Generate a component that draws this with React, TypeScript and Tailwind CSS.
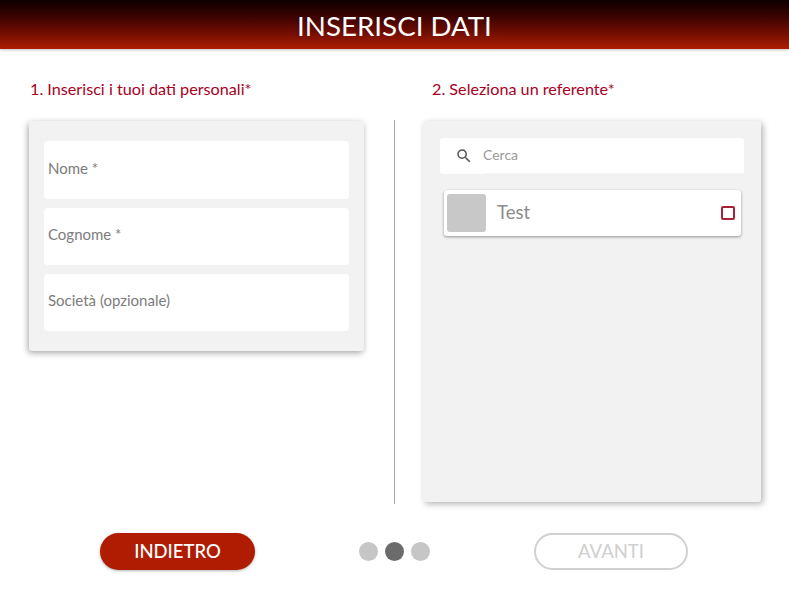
import React from "react";

const fields = [
  { label: "Nome *", height: "h-[58px]" },
  { label: "Cognome *", height: "h-[57px]" },
  { label: "Società (opzionale)", height: "h-[57px]" },
];

const App = () => {
  return (
    <div className="h-[592px] w-[789px] overflow-hidden bg-white font-['Lato',sans-serif]">
      {/* Header */}
      <div className="flex h-[49px] items-center justify-center bg-gradient-to-b from-[#0c0000] to-[#ad1d02] pt-[2px] shadow-[0_1px_3px_rgba(0,0,0,0.25)]">
        <h1 className="text-[27.7px] font-normal leading-none text-white">INSERISCI DATI</h1>
      </div>

      <div className="flex h-[455px]">
        {/* Left column */}
        <div className="w-[394px] pl-[29px] pr-[30px]">
          <div className="flex h-[72px] items-center pl-px pt-[9px] text-[16.2px] text-[#a8001c]">
            1. Inserisci i tuoi dati personali*
          </div>
          <div className="flex h-[230px] flex-col gap-[9px] rounded-[3px] bg-[#f2f2f2] px-[15px] pt-5 shadow-[-1px_2px_6px_rgba(0,0,0,0.35)]">
            {fields.map((f) => (
              <div
                key={f.label}
                className={`flex ${f.height} items-center rounded-[4px] bg-white pb-[4px] pl-[4px] text-[15px] text-[#7c7c7c]`}
              >
                {f.label}
              </div>
            ))}
          </div>
        </div>

        <div className="mt-[71px] h-[384px] w-px bg-[#a9a9a9]" />

        {/* Right column */}
        <div className="w-[366px] pl-[28px]">
          <div className="flex h-[72px] items-center pl-[9px] pt-[9px] text-[16.2px] text-[#a8001c]">
            2. Seleziona un referente*
          </div>
          <div className="h-[381px] w-[338px] rounded-[3px] bg-[#f2f2f2] px-[17px] pt-[17px] shadow-[2px_2px_6px_rgba(0,0,0,0.3)]">
            <div className="flex h-9 w-[304px] items-center rounded-[3px] bg-white pl-[15px] text-[14px] text-[#9a9a9a]">
              <svg viewBox="0 0 24 24" className="mb-px h-[18px] w-[18px] fill-[#555555]">
                <path d="M15.5 14h-.79l-.28-.27A6.47 6.47 0 0 0 16 9.5 6.5 6.5 0 1 0 9.5 16c1.61 0 3.09-.59 4.23-1.57l.27.28v.79l5 4.99L20.49 19l-4.99-5zm-6 0C7.01 14 5 11.99 5 9.5S7.01 5 9.5 5 14 7.01 14 9.5 11.99 14 9.5 14z" />
              </svg>
              <span className="ml-[10px] flex h-full flex-1 items-center border-b border-[#f5f5f5] pb-[3px]">Cerca</span>
            </div>
            <div className="ml-1 mt-4 flex h-[46px] w-[297px] items-center rounded-[3px] bg-white pl-[3px] pr-[6px] shadow-[0_1px_3px_rgba(0,0,0,0.4)]">
              <div className="h-[38px] w-[39px] rounded-[3px] bg-[#c8c8c8]" />
              <span className="ml-[11px] flex-1 text-[18.5px] text-[#8c8c8c]">Test</span>
              <div className="h-[14px] w-[14px] rounded-[2px] border-2 border-[#a8233a]" />
            </div>
          </div>
        </div>
      </div>

      {/* Footer */}
      <div className="mt-[29px] flex items-center pl-[100px]">
        <button className="h-[37px] w-[155px] rounded-full bg-[#b01c02] text-[18.5px] font-medium text-white shadow-[0_1px_3px_rgba(0,0,0,0.3)]">
          INDIETRO
        </button>
        <div className="ml-[104px] flex gap-[7px]">
          <div className="h-[19px] w-[19px] rounded-full bg-[#c6c6c6]" />
          <div className="h-[19px] w-[19px] rounded-full bg-[#6b6b6b]" />
          <div className="h-[19px] w-[19px] rounded-full bg-[#c6c6c6]" />
        </div>
        <button className="ml-[104px] h-[37px] w-[154px] rounded-full border-2 border-[#d0d0d0] bg-white text-[18.5px] text-[#cfcfcf]">
          AVANTI
        </button>
      </div>
    </div>
  );
};

export default App;
